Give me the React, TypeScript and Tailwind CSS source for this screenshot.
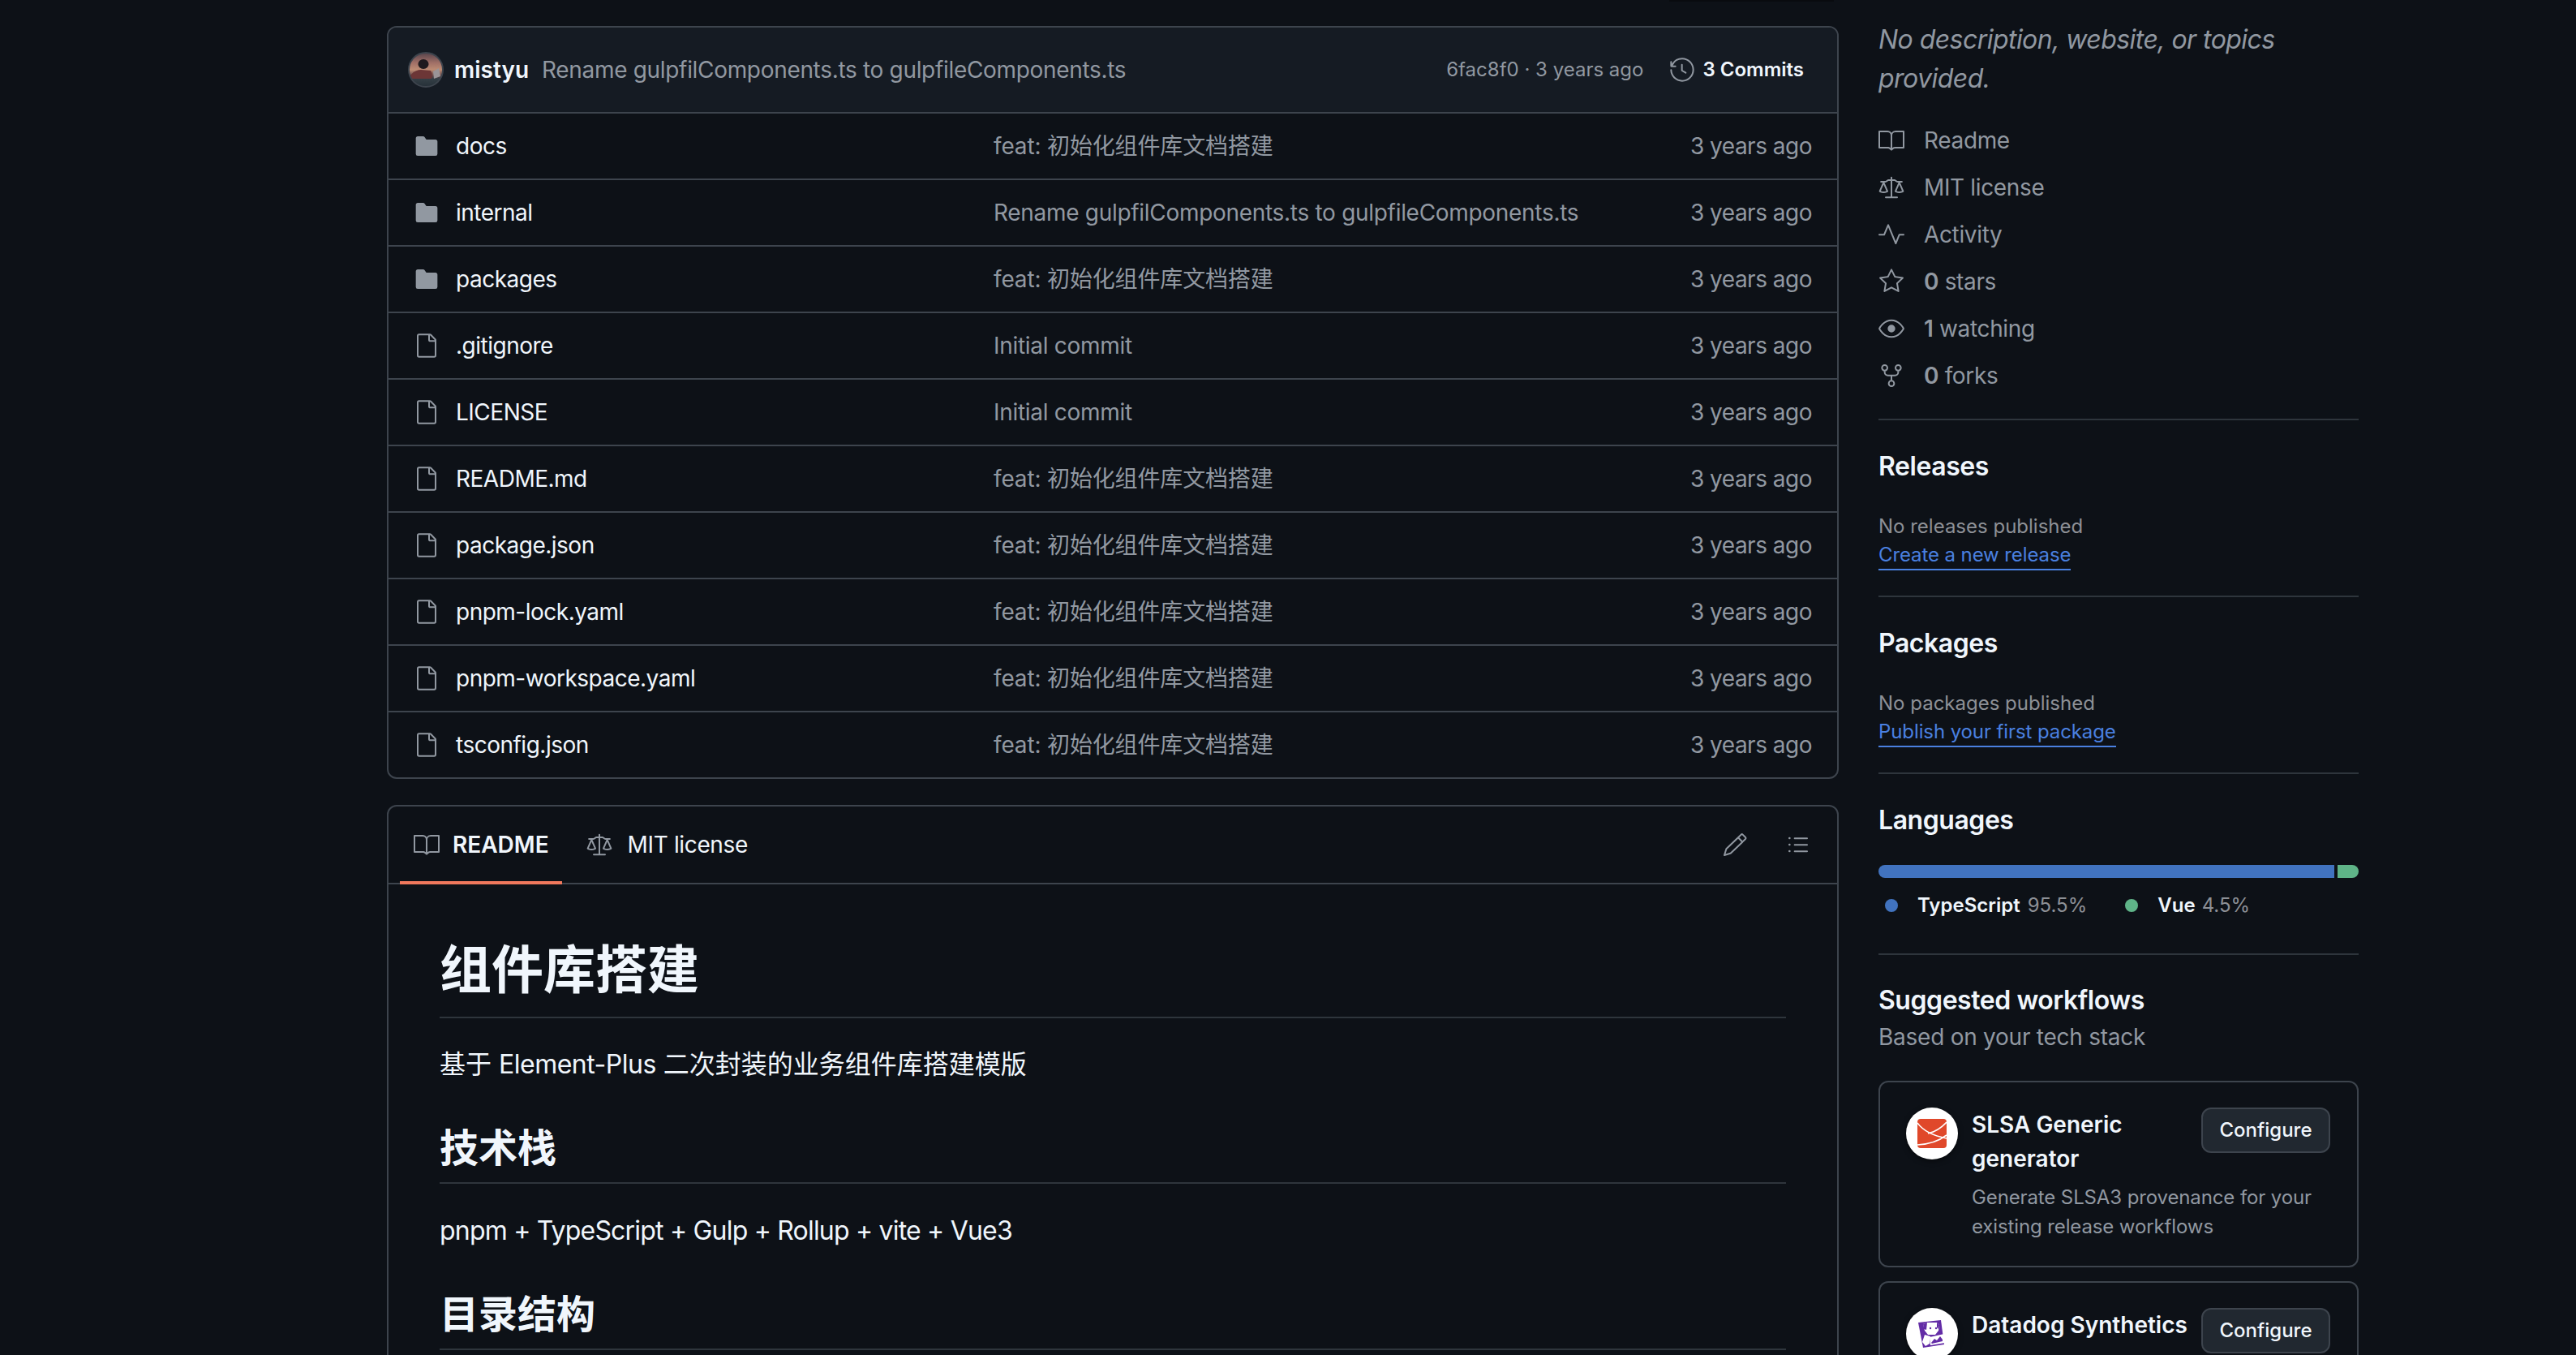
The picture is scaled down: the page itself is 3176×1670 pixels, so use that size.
import {
  GoBook,
  GoEye,
  GoFile,
  GoFileDirectoryFill,
  GoHistory,
  GoLaw,
  GoListUnordered,
  GoPencil,
  GoPulse,
  GoRepoForked,
  GoStar,
} from "react-icons/go";

const FEAT = "feat: 初始化组件库文档搭建";

const files = [
  { name: "docs", dir: true, msg: FEAT },
  { name: "internal", dir: true, msg: "Rename gulpfilComponents.ts to gulpfileComponents.ts" },
  { name: "packages", dir: true, msg: FEAT },
  { name: ".gitignore", dir: false, msg: "Initial commit" },
  { name: "LICENSE", dir: false, msg: "Initial commit" },
  { name: "README.md", dir: false, msg: FEAT },
  { name: "package.json", dir: false, msg: FEAT },
  { name: "pnpm-lock.yaml", dir: false, msg: FEAT },
  { name: "pnpm-workspace.yaml", dir: false, msg: FEAT },
  { name: "tsconfig.json", dir: false, msg: FEAT },
];

function MistyuAvatar() {
  return (
    <svg viewBox="0 0 44 44" className="w-[44px] h-[44px] shrink-0">
      <defs>
        <linearGradient id="sunset" x1="0" y1="0" x2="0" y2="1">
          <stop offset="0" stopColor="#4f3f49" />
          <stop offset="0.3" stopColor="#a06f66" />
          <stop offset="0.5" stopColor="#bd8c74" />
          <stop offset="0.68" stopColor="#5f4346" />
          <stop offset="0.75" stopColor="#343f46" />
          <stop offset="1" stopColor="#242e36" />
        </linearGradient>
        <clipPath id="round">
          <circle cx="22" cy="22" r="21" />
        </clipPath>
      </defs>
      <g clipPath="url(#round)">
        <rect width="44" height="44" fill="url(#sunset)" />
        <path d="M2 30 Q8 22 16 22 L28 23 Q31 27 29 33 L2 33 Z" fill="#6c3636" />
        <ellipse cx="19" cy="15" rx="6.5" ry="6" fill="#1f1a1e" />
        <path d="M31 24 L38 20 L40 30 L32 33 Z" fill="#9a9497" />
      </g>
      <circle cx="22" cy="22" r="21" fill="none" stroke="#3d444d" strokeWidth="2" />
    </svg>
  );
}

function SlsaLogo() {
  return (
    <div className="w-[64px] h-[64px] shrink-0 rounded-full bg-white shadow-[0_2px_6px_rgba(0,0,0,0.5)] flex items-center justify-center">
      <svg viewBox="0 0 36 36" className="w-[36px] h-[36px]">
        <rect width="36" height="36" rx="4" fill="#e0482a" />
        <path d="M0 5 Q10 19 36 24" fill="none" stroke="#fff" strokeWidth="1.6" />
        <path d="M36 4 Q26 15 13 18" fill="none" stroke="#fff" strokeWidth="1.6" />
        <path d="M0 32 Q22 31 36 20" fill="none" stroke="#fff" strokeWidth="1.6" />
      </svg>
    </div>
  );
}

function DatadogLogo() {
  return (
    <div className="w-[64px] h-[64px] shrink-0 rounded-full bg-white shadow-[0_2px_6px_rgba(0,0,0,0.5)]">
      <svg viewBox="0 0 64 64" className="w-[64px] h-[64px]">
        <polygon points="15,18 43,15 47,45 21,49" fill="#632ca6" />
        <path d="M21 20 L26 18 L38 18 L41 21 L40 28 L36 33 L27 33 L23 28 Z" fill="#fff" />
        <path d="M23 33 L30 35 L29 44 L24 47 L20 42 Z" fill="#fff" />
        <polygon points="29,36 47,32 48,43 30,46" fill="#fff" />
        <path d="M31 43 L35 38 L38 40 L42 35 L45 39 L45 41 L32 44 Z" fill="#632ca6" />
        <circle cx="30" cy="25" r="1.2" fill="#632ca6" />
        <circle cx="37" cy="25" r="1.2" fill="#632ca6" />
        <path d="M21 20 L26 18 L25 27 L22 26 Z" fill="#632ca6" />
        <path d="M38 18 L41 21 L40 26 L38 24 Z" fill="#632ca6" />
      </svg>
    </div>
  );
}

function Stat({ icon, children }: { icon: React.ReactNode; children: React.ReactNode }) {
  return (
    <div className="flex items-center h-[58px] gap-[24px] text-[28px] tracking-[-0.35px] text-[#9198a1]">
      <span className="w-[32px] h-[32px] shrink-0 flex items-center justify-center">{icon}</span>
      <span>{children}</span>
    </div>
  );
}

function WorkflowCard({
  logo,
  title,
  desc,
  className,
}: {
  logo: React.ReactNode;
  title: string;
  desc?: string;
  className?: string;
}) {
  return (
    <div className={`rounded-[12px] border-2 border-[#3d444d] pl-[32px] pr-[33px] pt-[31px] pb-[30px] flex gap-[17px] ${className ?? ""}`}>
      {logo}
      <div className="flex-1 min-w-0">
        <div className="flex items-start justify-between gap-[8px]">
          <div className="text-[28px] leading-[42px] font-semibold text-[#f0f6fc]">{title}</div>
          <button className="w-[159px] h-[56px] shrink-0 rounded-[12px] border-2 border-[#3d444d] bg-[#212830] text-[24px] font-medium text-[#f0f6fc]">
            Configure
          </button>
        </div>
        {desc && <p className="mt-[9px] text-[24px] leading-[36px] tracking-[-0.12px] text-[#9198a1]">{desc}</p>}
      </div>
    </div>
  );
}

export default function App() {
  return (
    <div className="relative h-[1670px] overflow-hidden bg-[#0d1117] flex pl-[477px] font-['Inter','Noto_Sans_CJK_SC',sans-serif] text-[#f0f6fc]">
      <div className="absolute top-0 left-[2058px] w-[203px] h-[2px] bg-[#090b0f]" />

      <main className="w-[1790px] shrink-0 pt-[32px]">
        <div className="rounded-[12px] border-2 border-[#3d444d]">
          <div className="h-[106px] rounded-t-[10px] bg-[#151b23] border-b-2 border-[#3d444d] flex items-center pl-[24px] pr-[41px]">
            <MistyuAvatar />
            <span className="ml-[13px] text-[28px] font-semibold">mistyu</span>
            <span className="ml-[16px] text-[28px] tracking-[-0.32px] text-[#9198a1]">
              Rename gulpfilComponents.ts to gulpfileComponents.ts
            </span>
            <span className="ml-auto text-[24px] text-[#9198a1]">6fac8f0 · 3 years ago</span>
            <GoHistory className="ml-[32px] text-[#9198a1]" size={32} />
            <span className="ml-[9px] text-[24px] font-semibold">3 Commits</span>
          </div>

          {files.map((f, i) => (
            <div
              key={f.name}
              className={`flex items-center pl-[31px] pr-[31px] ${i < files.length - 1 ? "h-[82px] border-b-2 border-[#3d444d]" : "h-[80px]"}`}
            >
              {f.dir ? (
                <GoFileDirectoryFill className="shrink-0 text-[#9198a1]" size={32} />
              ) : (
                <GoFile className="shrink-0 text-[#9198a1]" size={32} />
              )}
              <span className="ml-[20px] w-[663px] shrink-0 text-[28px] tracking-[-0.5px]">{f.name}</span>
              <span className={`text-[28px] text-[#9198a1] ${f.msg === FEAT ? "tracking-[-0.15px]" : "tracking-[-0.3px]"}`}>{f.msg}</span>
              <span className="ml-auto text-[28px] tracking-[-0.5px] text-[#9198a1]">3 years ago</span>
            </div>
          ))}
        </div>

        <div className="mt-[32px] rounded-t-[12px] border-2 border-[#3d444d] h-[800px]">
          <div className="h-[96px] border-b-2 border-[#3d444d] flex items-stretch pl-[14px] pr-[32px]">
            <div className="-mb-[2px] h-[96px] pt-[2px] border-b-4 border-[#f0785c] flex items-center gap-[16px] pl-[17px] pr-[16px]">
              <GoBook className="text-[#9198a1]" size={32} />
              <span className="text-[28px] font-semibold">README</span>
            </div>
            <div className="ml-[13px] flex items-center gap-[19px] pl-[17px]">
              <GoLaw className="text-[#9198a1]" size={32} />
              <span className="text-[28px] tracking-[-0.36px]">MIT license</span>
            </div>
            <div className="ml-auto flex items-center gap-[46px]">
              <GoPencil className="text-[#9198a1]" size={32} />
              <GoListUnordered className="text-[#9198a1]" size={32} />
            </div>
          </div>

          <div className="px-[63px] pt-[65px]">
            <h1 className="text-[64px] leading-[80px] font-bold pb-[18px] border-b-2 border-[#3d444db3]">组件库搭建</h1>
            <p className="mt-[33px] text-[32px] leading-[48px]">
              基于 <span className="tracking-[-0.5px]">Element-Plus</span> 二次封装的业务组件库搭建模版
            </p>
            <h2 className="mt-[47px] pt-[2px] text-[48px] leading-[60px] font-bold pb-[12px] border-b-2 border-[#3d444db3]">技术栈</h2>
            <p className="mt-[34px] text-[32px] leading-[48px] tracking-[-0.8px]">pnpm + TypeScript + Gulp + Rollup + vite + Vue3</p>
            <h2 className="mt-[47px] pt-[2px] text-[48px] leading-[60px] font-bold pb-[12px] border-b-2 border-[#3d444db3]">目录结构</h2>
          </div>
        </div>
      </main>

      <aside className="ml-[49px] w-[592px] shrink-0 pt-[25px]">
        <p className="text-[32px] leading-[48px] italic tracking-[-0.55px] text-[#9198a1]">No description, website, or topics provided.</p>

        <div className="mt-[23px]">
          <Stat icon={<GoBook size={32} />}>Readme</Stat>
          <Stat icon={<GoLaw size={32} />}>MIT license</Stat>
          <Stat icon={<GoPulse size={32} />}>Activity</Stat>
          <Stat icon={<GoStar size={32} />}>
            <b className="font-semibold">0</b> stars
          </Stat>
          <Stat icon={<GoEye size={32} />}>
            <b className="font-semibold">1</b> watching
          </Stat>
          <Stat icon={<GoRepoForked size={32} />}>
            <b className="font-semibold">0</b> forks
          </Stat>
        </div>

        <div className="mt-[24px] h-[2px] bg-[#3d444db3]" />

        <h2 className="mt-[33px] text-[32px] leading-[48px] tracking-[-0.45px] font-semibold">Releases</h2>
        <div className="mt-[32px] text-[24px] leading-[36px] text-[#8d9096]">No releases published</div>
        <a className="block w-fit h-[36px] leading-[34px] text-[24px] tracking-[-0.1px] text-[#4a80e0] border-b-2 border-[#4a80e0]">Create a new release</a>

        <div className="mt-[31px] h-[2px] bg-[#3d444db3]" />

        <h2 className="mt-[33px] text-[32px] leading-[48px] tracking-[-0.45px] font-semibold">Packages</h2>
        <div className="mt-[32px] text-[24px] leading-[36px] text-[#8d9096]">No packages published</div>
        <a className="block w-fit h-[36px] leading-[34px] text-[24px] tracking-[-0.1px] text-[#4a80e0] border-b-2 border-[#4a80e0]">Publish your first package</a>

        <div className="mt-[31px] h-[2px] bg-[#3d444db3]" />

        <h2 className="mt-[33px] text-[32px] leading-[48px] tracking-[-0.45px] font-semibold">Languages</h2>
        <div className="mt-[31px] h-[16px] flex gap-[4px] rounded-full overflow-hidden">
          <div className="w-[562px] bg-[#4173bf]" />
          <div className="flex-1 bg-[#5fb488]" />
        </div>
        <div className="mt-[16px] h-[36px] flex items-center text-[24px]">
          <span className="ml-[8px] w-[16px] h-[16px] rounded-full bg-[#4173bf]" />
          <span className="ml-[24px] font-semibold">TypeScript</span>
          <span className="ml-[9px] text-[#8d9096]">95.5%</span>
          <span className="ml-[47px] w-[16px] h-[16px] rounded-full bg-[#5fb488]" />
          <span className="ml-[24px] font-semibold">Vue</span>
          <span className="ml-[8px] text-[#8d9096]">4.5%</span>
        </div>

        <div className="mt-[41px] h-[2px] bg-[#3d444db3]" />

        <h2 className="mt-[32px] text-[32px] leading-[48px] tracking-[-0.45px] font-semibold">Suggested workflows</h2>
        <div className="text-[28px] leading-[42px] tracking-[-0.25px] text-[#9198a1]">Based on your tech stack</div>

        <WorkflowCard
          className="mt-[33px]"
          logo={<SlsaLogo />}
          title="SLSA Generic generator"
          desc="Generate SLSA3 provenance for your existing release workflows"
        />
        <WorkflowCard className="mt-[17px]" logo={<DatadogLogo />} title="Datadog Synthetics" />
      </aside>
    </div>
  );
}
